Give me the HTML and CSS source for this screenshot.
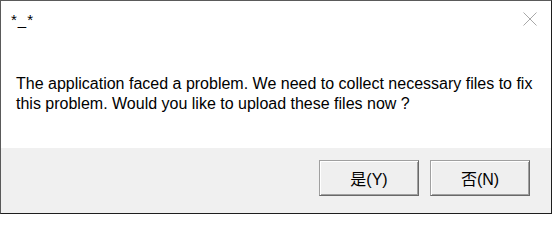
FILE: index.html
```html
<!DOCTYPE html>
<html>
<head>
<meta charset="utf-8">
<link rel="stylesheet" href="styles.css">
</head>
<body>
<div class="window">
  <div class="titlebar">
    <span class="title">*_*</span>
    <span class="close" aria-label="Close">
      <svg width="14" height="14" viewBox="0 0 14 14"><path d="M0.5 0.5 L13.5 13.5 M13.5 0.5 L0.5 13.5" stroke="#a8a8a8" stroke-width="1" fill="none"/></svg>
    </span>
  </div>
  <div class="content">
    <p class="message">The application faced a problem. We need to collect necessary files to fix<br>this problem. Would you like to upload these files now ?</p>
  </div>
  <div class="footer">
    <button class="btn">是(Y)</button>
    <button class="btn">否(N)</button>
  </div>
</div>
</body>
</html>
```
FILE: styles.css
```css
html, body {
  margin: 0;
  padding: 0;
}
body {
  font-family: "Liberation Sans", "Noto Sans CJK SC", sans-serif;
  background: #fff;
}
.window {
  width: 552px;
  height: 214px;
  box-sizing: border-box;
  border: 1px solid #5a5a5a;
  border-right-color: #1e1e1e;
  border-bottom-color: #1e1e1e;
  background: #fff;
  display: flex;
  flex-direction: column;
}
.titlebar {
  height: 56px;
  display: flex;
  justify-content: space-between;
  align-items: flex-start;
}
.title {
  font-size: 15px;
  line-height: 17px;
  margin: 10px 0 0 10px;
  letter-spacing: 1px;
  color: #000;
}
.close {
  display: block;
  width: 14px;
  height: 14px;
  margin: 11px 14px 0 0;
}
.close svg {
  display: block;
}
.content {
  flex: 1;
  padding: 17px 0 0 15px;
}
.message {
  margin: 0;
  font-size: 16px;
  line-height: 20px;
  color: #000;
  white-space: nowrap;
}
.footer {
  height: 65px;
  background: #f0f0f0;
  display: flex;
  justify-content: flex-end;
  align-items: flex-start;
  gap: 11px;
  padding: 12px 21px 0 0;
  box-sizing: border-box;
}
.btn {
  width: 100px;
  height: 36px;
  background: #efefef;
  border: 1px solid;
  border-color: #a0a0a0 #696969 #696969 #a0a0a0;
  box-shadow: inset 1px 1px 0 #fff, inset -1px -1px 0 #a0a0a0;
  font-family: "Liberation Sans", "Noto Sans CJK SC", sans-serif;
  font-size: 16px;
  color: #000;
  padding: 0;
  margin: 0;
}
```
